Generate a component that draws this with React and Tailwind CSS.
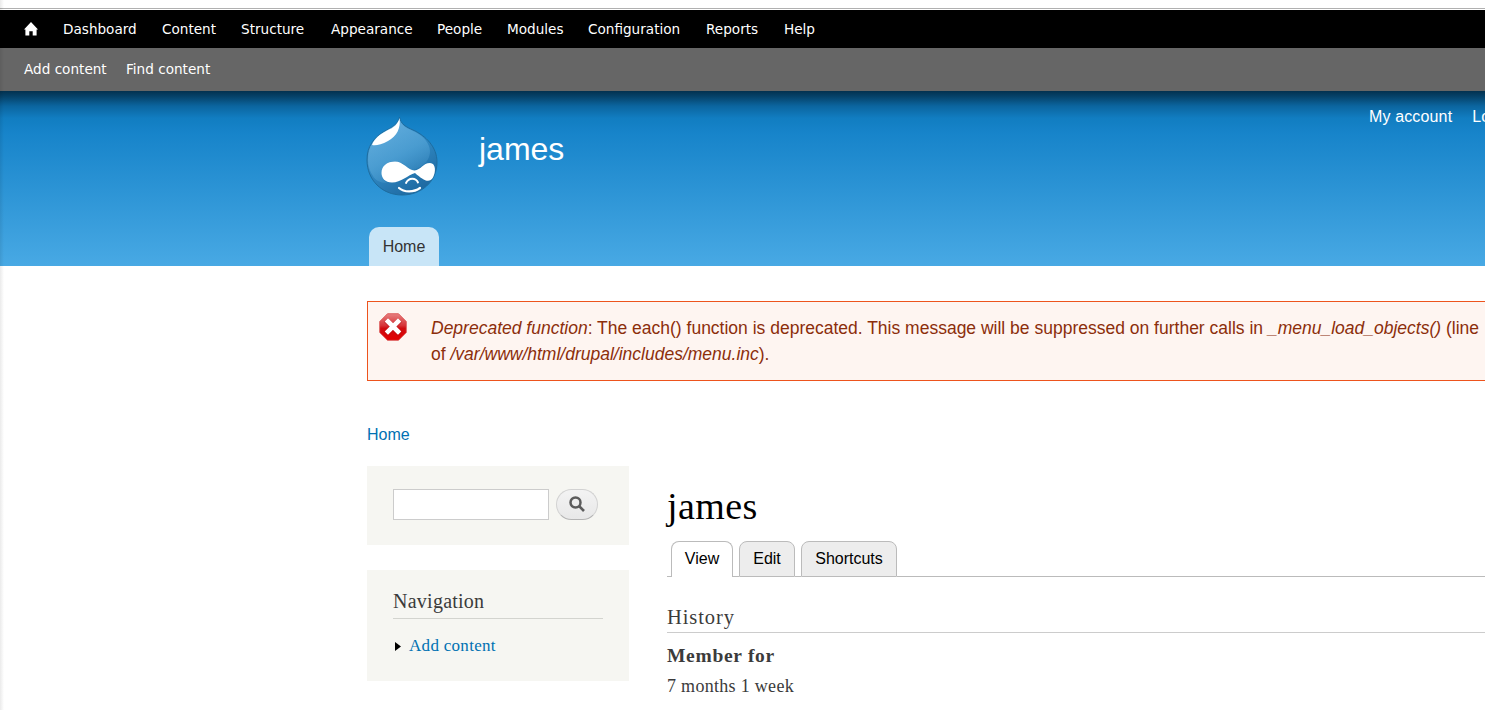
const navItems = [
  { label: "Dashboard", width: "w-[74px]" },
  { label: "Content", width: "w-[54px]" },
  { label: "Structure", width: "w-[65px]" },
  { label: "Appearance", width: "w-[81px]" },
  { label: "People", width: "w-[45px]" },
  { label: "Modules", width: "w-[56px]" },
  { label: "Configuration", width: "w-[93px]" },
  { label: "Reports", width: "w-[53px]" },
  { label: "Help", width: "w-[32px]" },
];

function HomeIcon() {
  return (
    <svg className="block h-[14px] w-[14px] shrink-0" viewBox="0 0 14 14" fill="#fff">
      <path d="M7 0 14 7.500h-1.400V13.500H8.700V9.200H5.300v4.300H1.400V7.500H0z" />
    </svg>
  );
}

function Toolbar() {
  return (
    <nav className="font-['DejaVu_Sans',sans-serif] text-[13.600px] text-white">
      <div className="flex h-[38px] items-center gap-[25px] bg-black pl-6 whitespace-nowrap">
        <HomeIcon />
        {navItems.map((n) => (
          <a key={n.label} className={n.width}>{n.label}</a>
        ))}
      </div>
      <div className="flex h-[43px] items-center gap-[18px] bg-[#666] pl-6 whitespace-nowrap">
        <a className="w-[84px]">Add content</a>
        <a>Find content</a>
      </div>
    </nav>
  );
}

function Druplicon() {
  return (
    <svg className="block h-[80px] w-[72px] shrink-0" viewBox="0 0 72 80">
      <defs>
        <linearGradient id="body" x1="0.2" y1="0.1" x2="0.7" y2="1">
          <stop offset="0" stopColor="#4c9fd6" />
          <stop offset="0.5" stopColor="#2f86c0" />
          <stop offset="1" stopColor="#1d68a0" />
        </linearGradient>
        <linearGradient id="shine" x1="0.1" y1="0" x2="0.6" y2="1">
          <stop offset="0" stopColor="#6fb4e0" stopOpacity="0.7" />
          <stop offset="0.6" stopColor="#5aa9da" stopOpacity="0.6" />
          <stop offset="1" stopColor="#5aa9da" stopOpacity="0.1" />
        </linearGradient>
      </defs>
      <path d="M33.500 1C34.500 8 40 11 47 14C60 20 71 31 71 46C71 66 55 79 36 79C16 79 1 64 1 44C1 30 8 22 17 16C27 11 32 8 33.500 1Z" fill="url(#body)" stroke="#1e6c9e" strokeWidth="1" />
      <path d="M2 44C2 30 9 22 18 16C27 11 32 8 33.500 3C35 9 40 12 47 15C59 20 67 31 63 41C60 49 53 52 47 54C41 54 38 45 29 45C21 45 16 51 16 58C16 62 18 65 21 67C14 67 9 64 7 60C4 56 2 50 2 44Z" fill="url(#shine)" />
      <path d="M33.500 2C35 12 31 20 22 25C15 29 9 30 6 29C8 23 14 18 21 14.500C28 11.500 32 8 33.500 2Z" fill="#fff" />
      <path d="M29 45.500C37 45.500 42 54 48.500 54.500C55 54 57 47 64 47C70 47 70 56 67 61.500C63 68 57 64 49 57C42 59 35 66.500 26 66.500C19 66.500 15.500 62 15.500 57C15.500 50 21 45.500 29 45.500Z" fill="#fff" />
      <path d="M40 67C43 61 50 62 52 66.500" fill="none" stroke="#fff" strokeWidth="1.900" strokeLinecap="round" />
      <path d="M33 72C38 76.500 48 76.500 54 72" fill="none" stroke="#fff" strokeWidth="2.2" strokeLinecap="round" />
    </svg>
  );
}

function Header() {
  return (
    <header className="h-[175px] bg-[linear-gradient(to_bottom,#03314f_0px,#06446c_6px,#0b659f_15px,#117dc1_27px,#1784ca_42px,#48a9e4_175px)] pt-[15px] text-white">
      <div className="flex h-[121px]">
        <div className="pt-[10px] pl-[366px]"><Druplicon /></div>
        <h1 className="w-[931px] shrink-0 pt-[22px] pl-[41px] text-[32px] leading-[42px]">james</h1>
        <div className="flex shrink-0 gap-5 pt-px text-[16px] leading-5 tracking-[0.14px] whitespace-nowrap">
          <a>My account</a>
          <a>Log out</a>
        </div>
      </div>
      <a className="ml-[369px] flex h-[39px] w-[70px] items-center justify-center rounded-t-[10px] bg-[#c8e5f7] text-[16px] text-[#333]">Home</a>
    </header>
  );
}

function ErrorIcon() {
  return (
    <svg className="mt-[11px] ml-[11px] block h-[28px] w-[28px] shrink-0" viewBox="0 0 28 28">
      <defs>
        <linearGradient id="stop" x1="0" y1="0" x2="0" y2="1">
          <stop offset="0" stopColor="#e88080" />
          <stop offset="0.45" stopColor="#d63236" />
          <stop offset="0.55" stopColor="#cf0c10" />
          <stop offset="1" stopColor="#e30000" />
        </linearGradient>
      </defs>
      <path d="M8.500.7h11L27.300 8.500v11l-7.800 7.800h-11L.7 19.500v-11z" fill="url(#stop)" stroke="#d84a4a" strokeWidth="0.8" />
      <path d="m9 9 10 10m0-10-10 10" stroke="#a90b0e" strokeWidth="6" strokeLinecap="square" opacity=".3" />
      <path d="m9 8.500 10 10m0-10-10 10" stroke="#fff" strokeWidth="4.600" strokeLinecap="square" />
    </svg>
  );
}

function Message() {
  return (
    <div className="mt-[35px] ml-[367px] flex h-[80px] border border-r-0 border-[#ed541d] bg-[#fef5f1] text-[#8c2e0b]">
      <ErrorIcon />
      <div className="pt-[13px] pl-[24px] text-[17.500px] leading-[26px] whitespace-nowrap">
        <p>
          <em>Deprecated function</em>: The each() function is deprecated. This message will be suppressed on further calls in <em>_menu_load_objects()</em> (line
        </p>
        <p>of <em>/var/www/html/drupal/includes/menu.inc</em>).</p>
      </div>
    </div>
  );
}

function Sidebar() {
  return (
    <aside className="w-[262px] shrink-0">
      <div className="flex h-[79px] gap-[7px] bg-[#f6f6f2] pt-[23px] pl-[26px]">
        <input className="h-[31px] w-[156px] border border-[#ccc] bg-white" />
        <button className="flex h-[31px] w-[42px] items-center justify-center rounded-full border border-[#d2d2d2] border-b-[#b4b4b4] bg-linear-to-b from-[#f3f3f3] to-[#e8e8e8]">
          <svg className="mb-px block h-4 w-4" viewBox="0 0 16 16" fill="none" stroke="#5c5c5c">
            <circle cx="6.500" cy="6.500" r="5" strokeWidth="2.500" />
            <path d="m10 10 5 5" strokeWidth="2.600" />
          </svg>
        </button>
      </div>
      <div className="mt-[25px] h-[111px] bg-[#f6f6f2] px-[26px] pt-[18px] font-['Liberation_Serif',serif]">
        <h2 className="h-[31px] border-b border-[#d3d4cf] text-[20px] leading-[26px] tracking-[0.250px] text-[#3b3b3b]">Navigation</h2>
        <a className="mt-[15px] flex items-center text-[17px] leading-6 tracking-[0.3px] text-[#0071b3]">
          <svg className="mr-[8px] ml-[2px] block h-[9px] w-[6px]" viewBox="0 0 6 9"><path d="M0 0 6 4.500 0 9z" /></svg>
          Add content
        </a>
      </div>
    </aside>
  );
}

function Profile() {
  return (
    <section className="min-w-0 grow pt-[17px] font-['Liberation_Serif',serif] text-[#3b3b3b]">
      <h1 className="h-[58px] text-[38px] leading-[46px] tracking-[0.4px] text-black">james</h1>
      <div className="flex h-[36px] items-end font-['Liberation_Sans',sans-serif] text-[16px] text-black">
        <span className="h-px w-[4px] bg-[#bbb]" />
        <a className="flex h-[36px] w-[62px] items-center justify-center rounded-t-[8px] border border-b-0 border-[#bbb] bg-white pb-px">View</a>
        <span className="h-px w-[6px] bg-[#bbb]" />
        <a className="flex h-[36px] w-[56px] items-center justify-center rounded-t-[8px] border border-[#bbb] bg-[#ededed]">Edit</a>
        <span className="h-px w-[6px] bg-[#bbb]" />
        <a className="flex h-[36px] w-[96px] items-center justify-center rounded-t-[8px] border border-[#bbb] bg-[#ededed]">Shortcuts</a>
        <span className="h-px grow bg-[#bbb]" />
      </div>
      <h3 className="mt-[26px] h-[30px] border-b border-[#ccc] text-[20.500px] leading-[28px] tracking-[0.9px]">History</h3>
      <p className="mt-[10px] text-[19.500px] leading-[26px] font-bold tracking-[0.7px]">Member for</p>
      <p className="mt-[4px] text-[18px] leading-[26px] tracking-[0.3px]">7 months 1 week</p>
    </section>
  );
}

export default function App() {
  return (
    <div className="relative h-[710px] w-[1485px] overflow-hidden bg-white font-['Liberation_Sans',sans-serif]">
      <div className="mb-px h-[9px] border-b border-[#b0b0b0]" />
      <Toolbar />
      <Header />
      <Message />
      <a className="mt-[44px] ml-[367px] block h-[20px] text-[16px] leading-5 text-[#0071b3]">Home</a>
      <main className="mt-[21px] flex gap-[38px] pl-[367px]">
        <Sidebar />
        <Profile />
      </main>
      <div className="absolute inset-y-0 left-0 w-[4px] bg-linear-to-r from-black/8 to-transparent" />
    </div>
  );
}
